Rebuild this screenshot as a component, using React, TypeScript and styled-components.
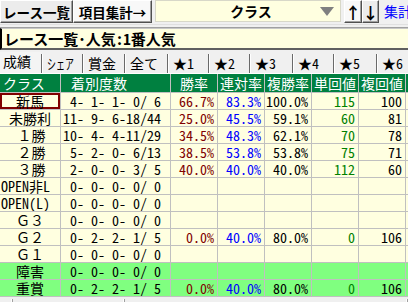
import React from 'react';
import styled, { createGlobalStyle } from 'styled-components';

const GlobalStyle = createGlobalStyle`
  html, body {
    margin: 0;
    padding: 0;
    background: #f0f0f0;
    overflow: hidden;
  }
  body {
    font-family: "Noto Sans CJK JP", sans-serif;
    font-feature-settings: "hwid" 1;
    font-size: 14px;
  }
`;

const Window = styled.div`
  width: 408px;
  height: 302px;
  display: flex;
  flex-direction: column;
  background: #f0f0f0;
  overflow: hidden;
`;

const Toolbar = styled.div`
  display: flex;
  align-items: flex-start;
  height: 24px;
`;

const ToolButton = styled.div<{ $width: number; $light?: boolean }>`
  width: ${(p) => p.$width}px;
  flex-shrink: 0;
  height: 23px;
  box-sizing: border-box;
  display: flex;
  align-items: center;
  justify-content: center;
  font-weight: bold;
  font-size: 13.5px;
  line-height: 16px;
  white-space: nowrap;
  color: #000;
  background: ${(p) => (p.$light ? '#f8f8f8' : '#ececec')};
  border: 1px solid;
  border-color: #ffffff #505050 #505050 #ffffff;
  box-shadow: inset -1px -1px 0 #a0a0a0;
`;

const Combo = styled.div`
  margin-left: 3px;
  width: 186px;
  flex-shrink: 0;
  height: 22px;
  box-sizing: border-box;
  display: flex;
  align-items: center;
  background: #ffffe0;
  border: 1px solid #d8d8c8;
`;

const ComboText = styled.div`
  flex: 1;
  text-align: center;
  padding-left: 30px;
  font-weight: bold;
  font-size: 14px;
`;

const ComboArrow = styled.div`
  width: 0;
  height: 0;
  margin: 0 6px 0 4px;
  border-left: 7px solid transparent;
  border-right: 7px solid transparent;
  border-top: 9px solid #808080;
`;

const ArrowButton = styled(ToolButton)`
  font-size: 16px;
  margin-left: ${(p) => (p.$light ? 3 : 0)}px;
`;

const LinkText = styled.div`
  margin-left: 5px;
  height: 23px;
  line-height: 23px;
  color: #0000ff;
  font-size: 14px;
  white-space: nowrap;
`;

const Divider = styled.div`
  height: 4px;
  box-sizing: border-box;
  border-top: 1px solid #e0e0e0;
  border-bottom: 1px solid #a0a0a0;
`;

const TitleBox = styled.div`
  height: 22px;
  box-sizing: border-box;
  margin-bottom: 1px;
  background: #ffffe0;
  border-left: 2px solid #000;
  border-top: 1px solid #c8c8c8;
  border-bottom: 2px solid #606060;
  padding-left: 2px;
  font-weight: bold;
  font-size: 15px;
  line-height: 19px;
  white-space: nowrap;
`;

const Tabs = styled.div`
  display: flex;
  height: 23px;
  box-sizing: border-box;
  padding-top: 2px;
  border-bottom: 1px solid #ffffff;
`;

const Tab = styled.div<{ $active?: boolean; $width: number }>`
  width: ${(p) => p.$width}px;
  flex-shrink: 0;
  box-sizing: border-box;
  padding-left: ${(p) => (p.$active ? 3 : 5)}px;
  font-size: 14px;
  line-height: 19px;
  white-space: nowrap;
  background: ${(p) => (p.$active ? '#f4f4f4' : '#f0f0f0')};
  border-left: ${(p) => (p.$active ? 'none' : '1px solid #6a6a6a')};
  box-shadow: ${(p) => (p.$active ? 'none' : 'inset 1px 0 0 #ffffff')};
  margin-top: ${(p) => (p.$active ? -1 : 1)}px;
`;

const NarrowKana = styled.span`
  display: inline-block;
  font-feature-settings: normal;
  transform: scaleX(0.64);
  transform-origin: left center;
`;

const Table = styled.div`
  display: grid;
  grid-template-columns: 60px 109px 46px 46px 46px 46px 46px 1fr;
  grid-auto-rows: 16px;
  grid-template-rows: 18px;
  gap: 1px;
  padding-bottom: 1px;
  background: #c0c0c0;
`;

const Head = styled.div<{ $align?: string }>`
  background: #008040;
  color: #ffffff;
  font-size: 14px;
  line-height: 18px;
  white-space: pre;
  text-align: ${(p) => p.$align || 'center'};
  padding-left: ${(p) => (p.$align === 'left' ? 3 : 0)}px;
  overflow: hidden;
`;

const Cell = styled.div<{ $green?: boolean; $color?: string; $align?: string; $selected?: boolean }>`
  background: ${(p) => (p.$green ? '#80ff80' : '#ffffe0')};
  color: ${(p) => p.$color || '#000000'};
  font-size: 14px;
  line-height: 16px;
  white-space: pre;
  overflow: hidden;
  text-align: ${(p) => p.$align || 'right'};
  padding: 0 3px 0 ${(p) => (p.$align === 'left' ? 2 : 0)}px;
  box-shadow: ${(p) => (p.$selected ? 'inset 0 0 0 2px #800000' : 'none')};
`;

const NameCell = styled(Cell)<{ $wide?: boolean }>`
  font-feature-settings: ${(p) => (p.$wide ? '"hwid" 1' : 'normal')};
  text-align: ${(p) => (p.$wide ? 'left' : 'center')};
  padding: 0 0 0 ${(p) => (p.$wide ? 1 : 0)}px;
`;

const Footer = styled.div`
  flex: 1;
  display: flex;
  padding-top: 2px;
`;

const FooterPane = styled.div<{ $width?: number }>`
  width: ${(p) => (p.$width ? `${p.$width}px` : 'auto')};
  flex: ${(p) => (p.$width ? '0 0 auto' : '1')};
  border-right: 1px solid #a0a0a0;
  box-shadow: inset -1px 0 0 #ffffff;
`;

type Row = {
  name: string;
  rec: string;
  win?: string;
  ren?: string;
  fuku?: string;
  tan?: string;
  fk?: string;
  left?: boolean;
  green?: boolean;
  selected?: boolean;
};

const rows: Row[] = [
  { name: '新馬', rec: ' 4- 1- 1- 0/ 6', win: '66.7%', ren: '83.3%', fuku: '100.0%', tan: '115', fk: '100', selected: true },
  { name: '未勝利', rec: '11- 9- 6-18/44', win: '25.0%', ren: '45.5%', fuku: '59.1%', tan: '60', fk: '81' },
  { name: ' １勝', rec: '10- 4- 4-11/29', win: '34.5%', ren: '48.3%', fuku: '62.1%', tan: '70', fk: '78' },
  { name: ' ２勝', rec: ' 5- 2- 0- 6/13', win: '38.5%', ren: '53.8%', fuku: '53.8%', tan: '75', fk: '71' },
  { name: ' ３勝', rec: ' 2- 0- 0- 3/ 5', win: '40.0%', ren: '40.0%', fuku: '40.0%', tan: '112', fk: '60' },
  { name: 'OPEN非L', rec: ' 0- 0- 0- 0/ 0', left: true },
  { name: 'OPEN(L)', rec: ' 0- 0- 0- 0/ 0', left: true },
  { name: 'Ｇ３', rec: ' 0- 0- 0- 0/ 0' },
  { name: 'Ｇ２', rec: ' 0- 2- 2- 1/ 5', win: '0.0%', ren: '40.0%', fuku: '80.0%', tan: '0', fk: '106' },
  { name: 'Ｇ１', rec: ' 0- 0- 0- 0/ 0' },
  { name: '障害', rec: ' 0- 0- 0- 0/ 0', green: true },
  { name: '重賞', rec: ' 0- 2- 2- 1/ 5', win: '0.0%', ren: '40.0%', fuku: '80.0%', tan: '0', fk: '106', green: true },
];

const tabs: [string, number][] = [
  ['成績', 41],
  ['シェア', 41],
  ['賞金', 42],
  ['全て', 43],
  ['★1', 41],
  ['★2', 41],
  ['★3', 43],
  ['★4', 41],
  ['★5', 43],
  ['★6', 40],
];

const App: React.FC = () => {
  return (
    <Window>
      <GlobalStyle />
      <Toolbar>
        <ToolButton $width={73}>レース一覧</ToolButton>
        <ToolButton $width={79} $light>項目集計→</ToolButton>
        <Combo>
          <ComboText>クラス</ComboText>
          <ComboArrow />
        </Combo>
        <ArrowButton $width={18} $light>↑</ArrowButton>
        <ArrowButton $width={17}>↓</ArrowButton>
        <LinkText>集計</LinkText>
      </Toolbar>
      <Divider />
      <TitleBox>レース一覧･人気:1番人気</TitleBox>
      <Tabs>
        {tabs.map(([label, w], i) => (
          <Tab key={label} $width={w} $active={i === 0}>
            {i === 1 ? <NarrowKana>{label}</NarrowKana> : label}
          </Tab>
        ))}
      </Tabs>
      <Table>
        <Head $align="left">クラス</Head>
        <Head $align="left">{' 着別度数'}</Head>
        <Head>勝率</Head>
        <Head>連対率</Head>
        <Head>複勝率</Head>
        <Head>単回値</Head>
        <Head>複回値</Head>
        <Head />
        {rows.map((r) => (
          <React.Fragment key={r.name}>
            <NameCell $green={r.green} $wide={r.left} $selected={r.selected}>
              {r.name}
            </NameCell>
            <Cell $green={r.green} $align="left">{r.rec}</Cell>
            <Cell $green={r.green} $color="#800000">{r.win}</Cell>
            <Cell $green={r.green} $color="#0000ff">{r.ren}</Cell>
            <Cell $green={r.green}>{r.fuku}</Cell>
            <Cell $green={r.green} $color="#008000">{r.tan}</Cell>
            <Cell $green={r.green}>{r.fk}</Cell>
            <Cell $green={r.green} />
          </React.Fragment>
        ))}
      </Table>
      <Footer>
        <FooterPane $width={12} />
        <FooterPane $width={111} />
        <FooterPane />
      </Footer>
    </Window>
  );
};

export default App;
